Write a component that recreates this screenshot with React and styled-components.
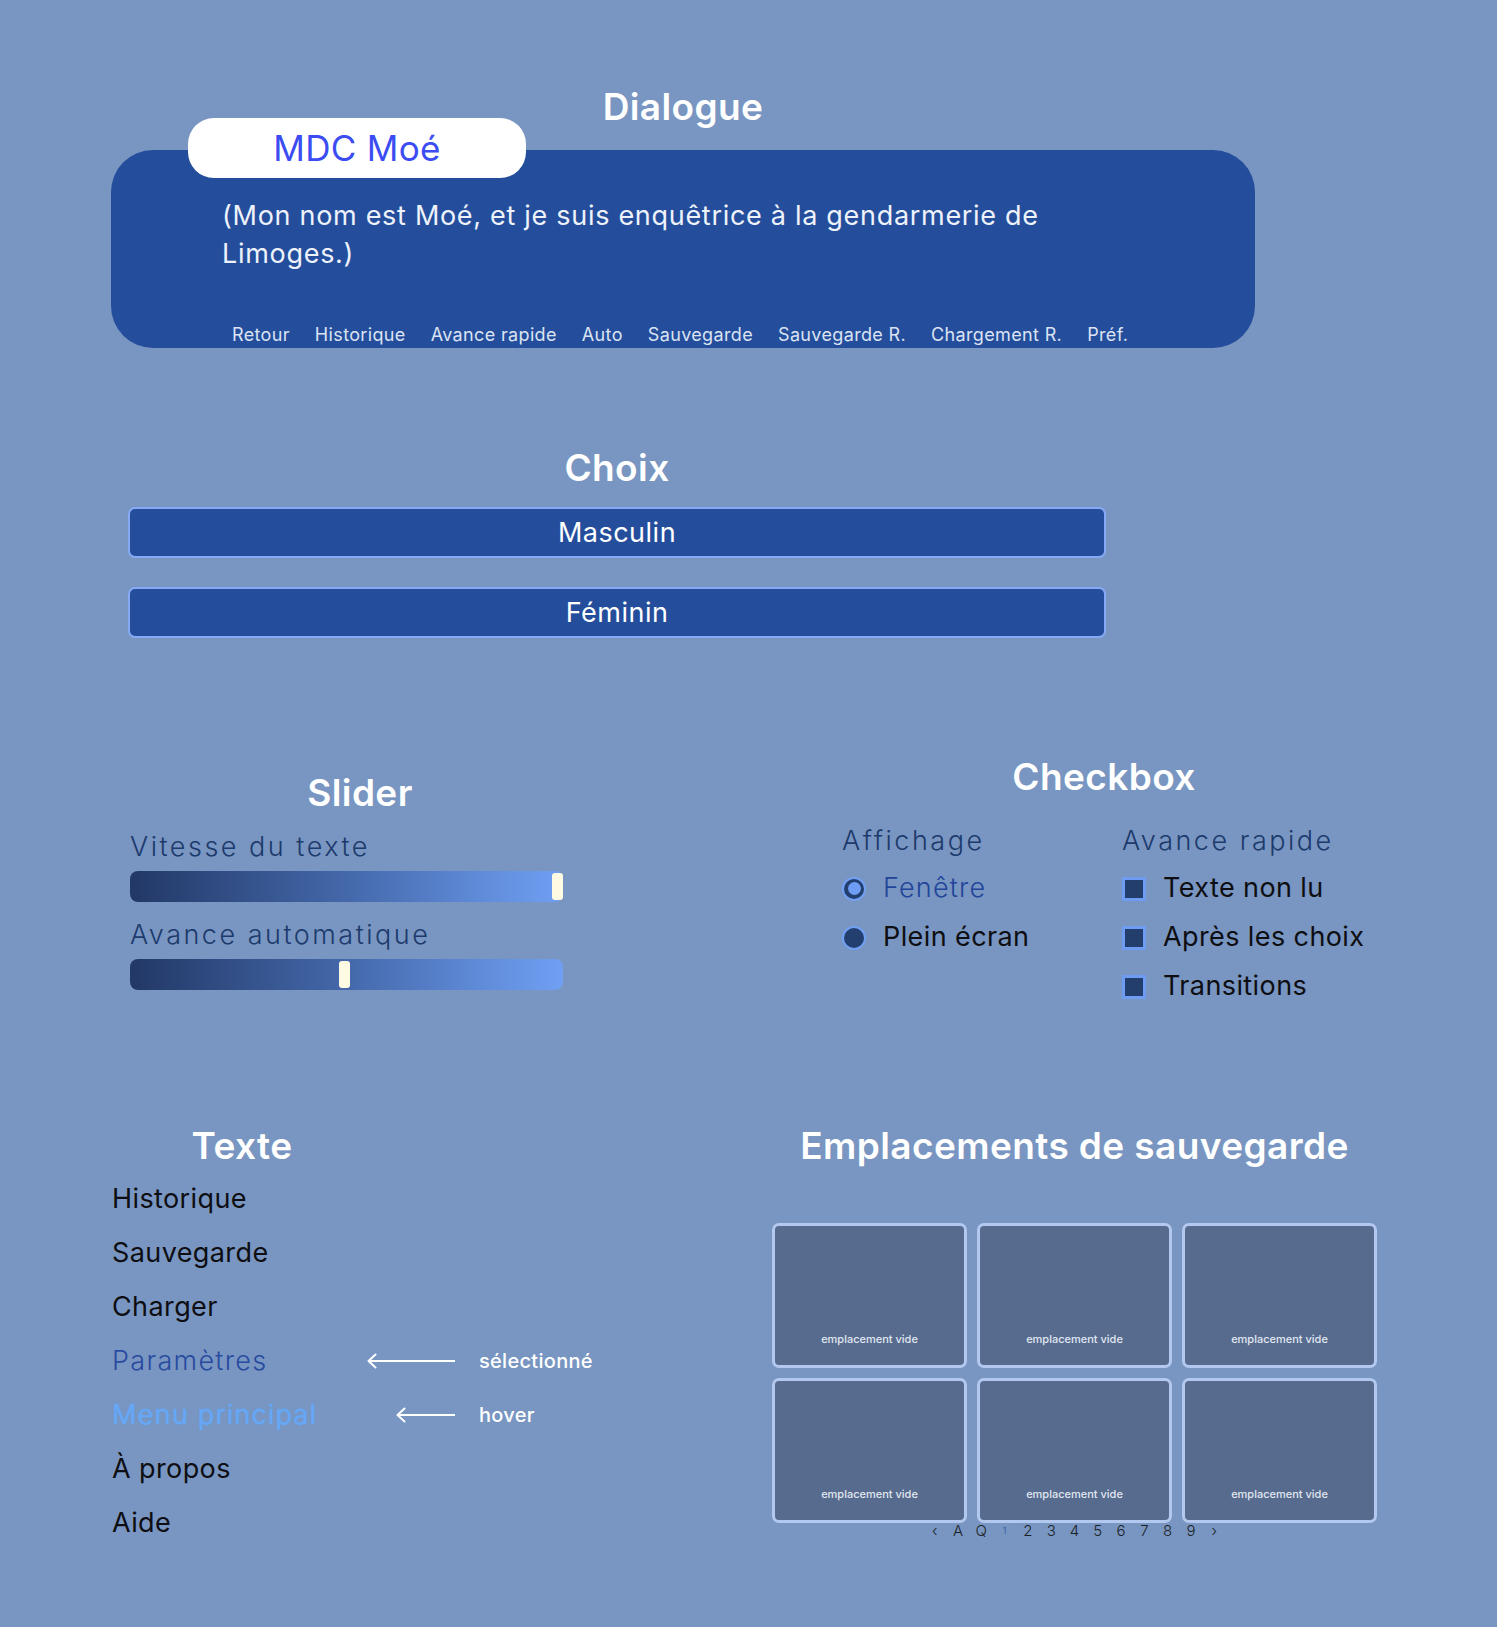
import React from 'react';
import styled, { createGlobalStyle } from 'styled-components';

const GlobalStyle = createGlobalStyle`
  html, body { margin: 0; padding: 0; }
  body {
    background: #7896c1;
    font-family: "Inter", "Open Sans", sans-serif;
  }
`;

const Page = styled.div`
  width: 1497px;
  min-height: 1627px;
  padding-top: 85px;
  box-sizing: border-box;
  display: flex;
  flex-direction: column;
`;

const Heading = styled.h2`
  margin: 0;
  font-size: 37px;
  line-height: 44px;
  font-weight: 600;
  letter-spacing: 0.4px;
  color: #fff;
  text-align: center;
  width: ${p => p.$width || 'auto'};
`;

/* ---------- Dialogue ---------- */

const DialogueSection = styled.section`
  margin-left: 111px;
  width: 1144px;
  display: flex;
  flex-direction: column;
`;

const DialogueBox = styled.div`
  position: relative;
  margin-top: 21px;
  height: 198px;
  box-sizing: border-box;
  background: #244e9c;
  border-radius: 42px;
  padding: 47px 0 2px 111px;
  display: flex;
  flex-direction: column;
`;

const NameTab = styled.div`
  position: absolute;
  top: -32px;
  left: 77px;
  width: 338px;
  height: 60px;
  background: #fff;
  border-radius: 26px;
  display: flex;
  align-items: center;
  justify-content: center;
  color: #3b4cf2;
  font-size: 35px;
  letter-spacing: 0.3px;
`;

const DialogueText = styled.p`
  margin: 0;
  width: 850px;
  font-size: 27px;
  line-height: 38px;
  letter-spacing: 0.7px;
  color: #eef2fb;
`;

const QuickMenu = styled.nav`
  margin-top: auto;
  padding-left: 10px;
  display: flex;
  gap: 25px;
`;

const QuickItem = styled.span`
  font-size: 18px;
  line-height: 22px;
  letter-spacing: 0.35px;
  color: #dbe3f3;
`;

/* ---------- Choix ---------- */

const ChoiceSection = styled.section`
  margin: 98px 0 0 128px;
  width: 978px;
  display: flex;
  flex-direction: column;
  gap: 29px;
`;

const ChoiceButton = styled.button`
  height: 51px;
  box-sizing: border-box;
  border: 2px solid #86a9f5;
  border-radius: 7px;
  background: #244e9c;
  color: #fff;
  font-family: inherit;
  font-size: 27px;
  letter-spacing: 0.5px;
  &:first-of-type { margin-top: -12px; }
`;

/* ---------- Slider / Checkbox ---------- */

const Row = styled.div`
  display: flex;
  align-items: flex-start;
  margin-top: ${p => p.$top}px;
`;

const SliderCol = styled.section`
  margin-left: 130px;
  width: 460px;
  padding-top: 13px;
  display: flex;
  flex-direction: column;
`;

const FieldLabel = styled.div`
  font-size: 27px;
  line-height: 34px;
  font-weight: 300;
  letter-spacing: 2.5px;
  color: #1d3a6c;
  margin-top: ${p => p.$top}px;
`;

const Track = styled.div`
  position: relative;
  width: 433px;
  height: 31px;
  margin-top: 7px;
  border-radius: 8px;
  background: linear-gradient(90deg, #223866 0%, #4468aa 50%, #70a0f4 100%);
`;

const Thumb = styled.div`
  position: absolute;
  top: 2px;
  bottom: 2px;
  width: 11px;
  border-radius: 3px;
  background: #fffbe2;
`;

const CheckCol = styled.section`
  margin-left: 252px;
  margin-top: -3px;
  width: 524px;
  display: flex;
  flex-direction: column;
`;

const OptionGroups = styled.div`
  display: grid;
  grid-template-columns: 280px auto;
`;

const OptionList = styled.div`
  display: flex;
  flex-direction: column;
  gap: 15px;
  padding-top: 13px;
`;

const Option = styled.div`
  display: flex;
  align-items: center;
  gap: 17px;
  height: 34px;
`;

const Radio = styled.span`
  position: relative;
  width: 24px;
  height: 24px;
  box-sizing: border-box;
  border-radius: 50%;
  border: 2.5px solid #72a1f4;
  background: #233f6f;
  margin-top: 2px;
  &::after {
    content: '';
    display: ${p => (p.$ring ? 'block' : 'none')};
    position: absolute;
    inset: 3.5px;
    border-radius: 50%;
    background: #6e9ef4;
  }
`;

const Box = styled.span`
  width: 24px;
  height: 24px;
  box-sizing: border-box;
  border: 3px solid #6e9cf2;
  background: #233d6d;
  margin-top: 2px;
`;

const OptionText = styled.span`
  font-size: 27px;
  line-height: 34px;
  color: ${p => (p.$active ? '#22449a' : '#0e0e12')};
  font-weight: ${p => (p.$active ? 300 : 400)};
  letter-spacing: ${p => (p.$active ? '1.2px' : '0.4px')};
`;

/* ---------- Texte ---------- */

const TextCol = styled.section`
  margin-left: 112px;
  width: 660px;
  display: flex;
  flex-direction: column;
`;

const MenuList = styled.div`
  display: flex;
  flex-direction: column;
  gap: 20px;
  padding-top: 14px;
`;

const MenuRow = styled.div`
  display: grid;
  grid-template-columns: 231px 88px auto;
  column-gap: 24px;
  align-items: center;
  height: 34px;
`;

const menuColors = {
  normal: '#0e0e12',
  selected: '#284aa0',
  hover: '#66a8f8',
};

const MenuText = styled.span`
  font-size: 27px;
  line-height: 34px;
  white-space: nowrap;
  color: ${p => menuColors[p.$state]};
  font-weight: ${p => (p.$state === 'normal' ? 400 : 300)};
  letter-spacing: ${p => (p.$state === 'normal' ? '0.4px' : '1.3px')};
  text-shadow: ${p => (p.$state === 'hover' ? '0 0 2px rgba(102, 168, 248, 0.9), 0 0 1px #66a8f8' : 'none')};
`;

const Arrow = styled.svg`
  justify-self: end;
  display: block;
`;

const Note = styled.span`
  font-size: 20px;
  line-height: 24px;
  font-weight: 500;
  letter-spacing: 0.3px;
  color: #fff;
`;

/* ---------- Emplacements ---------- */

const SaveCol = styled.section`
  width: 605px;
  display: flex;
  flex-direction: column;
`;

const SlotGrid = styled.div`
  margin-top: 55.5px;
  display: grid;
  grid-template-columns: repeat(3, 195px);
  grid-auto-rows: 145px;
  gap: 10px;
`;

const Slot = styled.div`
  box-sizing: border-box;
  border: 3px solid #b3c8ee;
  border-radius: 7px;
  background: #566b8e;
  display: flex;
  align-items: flex-end;
  justify-content: center;
  padding-bottom: 19px;
  font-size: 11px;
  line-height: 13px;
  font-weight: 500;
  color: #e1e7f1;
`;

const Pager = styled.div`
  margin-top: -1px;
  display: flex;
  justify-content: center;
`;

const PageKey = styled.span`
  width: 23.3px;
  text-align: center;
  font-size: ${p => (p.$current ? '9px' : '15px')};
  line-height: 18px;
  font-weight: 300;
  color: ${p => (p.$current ? '#2a4aa0' : '#1c1f26')};
  align-self: ${p => (p.$current ? 'flex-start' : 'auto')};
`;

function ArrowLeft({ width }) {
  return (
    <Arrow width={width} height="16" viewBox={`0 0 ${width} 16`}>
      <path d={`M${width} 8 H1.5 M8.5 1.5 L1.5 8 L8.5 14.5`} fill="none" stroke="#fff" strokeWidth="2" strokeLinecap="round" strokeLinejoin="round" />
    </Arrow>
  );
}

const quickItems = ['Retour', 'Historique', 'Avance rapide', 'Auto', 'Sauvegarde', 'Sauvegarde R.', 'Chargement R.', 'Préf.'];

const menu = [
  { label: 'Historique', state: 'normal' },
  { label: 'Sauvegarde', state: 'normal' },
  { label: 'Charger', state: 'normal' },
  { label: 'Paramètres', state: 'selected', note: 'sélectionné', arrow: 88 },
  { label: 'Menu principal', state: 'hover', note: 'hover', arrow: 59 },
  { label: 'À propos', state: 'normal' },
  { label: 'Aide', state: 'normal' },
];

const pages = ['‹', 'A', 'Q', '1', '2', '3', '4', '5', '6', '7', '8', '9', '›'];

function SliderBar({ value }) {
  return (
    <Track>
      <Thumb style={{ left: `${(value / 100) * 422}px` }} />
    </Track>
  );
}

export default function App() {
  return (
    <Page>
      <GlobalStyle />

      <DialogueSection>
        <Heading>Dialogue</Heading>
        <DialogueBox>
          <NameTab>MDC Moé</NameTab>
          <DialogueText>(Mon nom est Moé, et je suis enquêtrice à la gendarmerie de Limoges.)</DialogueText>
          <QuickMenu>
            {quickItems.map(q => <QuickItem key={q}>{q}</QuickItem>)}
          </QuickMenu>
        </DialogueBox>
      </DialogueSection>

      <ChoiceSection>
        <Heading>Choix</Heading>
        <ChoiceButton>Masculin</ChoiceButton>
        <ChoiceButton>Féminin</ChoiceButton>
      </ChoiceSection>

      <Row $top={119.5}>
        <SliderCol>
          <Heading>Slider</Heading>
          <FieldLabel $top={15.5}>Vitesse du texte</FieldLabel>
          <SliderBar value={100} />
          <FieldLabel $top={16}>Avance automatique</FieldLabel>
          <SliderBar value={49.5} />
        </SliderCol>

        <CheckCol>
          <Heading>Checkbox</Heading>
          <OptionGroups>
            <div>
              <FieldLabel $top={25}>Affichage</FieldLabel>
              <OptionList>
                <Option><Radio $ring /><OptionText $active>Fenêtre</OptionText></Option>
                <Option><Radio /><OptionText>Plein écran</OptionText></Option>
              </OptionList>
            </div>
            <div>
              <FieldLabel $top={25}>Avance rapide</FieldLabel>
              <OptionList>
                <Option><Box /><OptionText>Texte non lu</OptionText></Option>
                <Option><Box /><OptionText>Après les choix</OptionText></Option>
                <Option><Box /><OptionText>Transitions</OptionText></Option>
              </OptionList>
            </div>
          </OptionGroups>
        </CheckCol>
      </Row>

      <Row $top={121}>
        <TextCol>
          <Heading $width="260px">Texte</Heading>
          <MenuList>
            {menu.map(m => (
              <MenuRow key={m.label}>
                <MenuText $state={m.state}>{m.label}</MenuText>
                {m.note ? <ArrowLeft width={m.arrow} /> : <span />}
                {m.note ? <Note>{m.note}</Note> : <span />}
              </MenuRow>
            ))}
          </MenuList>
        </TextCol>

        <SaveCol>
          <Heading>Emplacements de sauvegarde</Heading>
          <SlotGrid>
            {Array.from({ length: 6 }).map((_, i) => (
              <Slot key={i}>emplacement vide</Slot>
            ))}
          </SlotGrid>
          <Pager>
            {pages.map((p, i) => (
              <PageKey key={i} $current={p === '1'}>{p}</PageKey>
            ))}
          </Pager>
        </SaveCol>
      </Row>
    </Page>
  );
}
